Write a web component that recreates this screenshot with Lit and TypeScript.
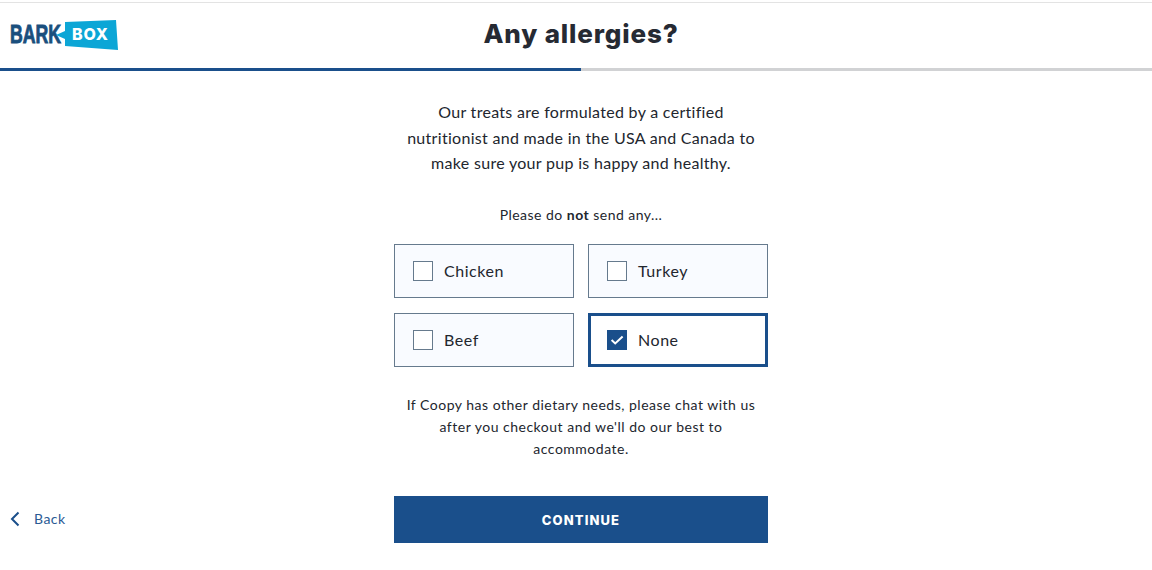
import { LitElement, html, css, svg } from "lit";
import { customElement } from "lit/decorators.js";

const OPTIONS = [
  { label: "Chicken", checked: false },
  { label: "Turkey", checked: false },
  { label: "Beef", checked: false },
  { label: "None", checked: true },
];

@customElement("app-root")
export class AppRoot extends LitElement {
  static styles = css`
    :host { display: block; width: 1152px; height: 570px; background: #fff; overflow: hidden;
      font-family: "Lato", "Liberation Sans", sans-serif; color: #22262e; }
    .topline { height: 1px; margin-top: 2px; background: #e3e3e3; }
    header { position: relative; height: 65px; display: flex; align-items: center; justify-content: center; padding-left: 10px; }
    .logo { position: absolute; left: 10px; top: 16px; display: block; }
    .logo .bark { font-family: "Liberation Sans", sans-serif; font-weight: 700; }
    .logo .box-word { font-family: "Inter", sans-serif; font-weight: 800; }
    h1 { margin: 0 0 4px; font: 800 26px/32px "Inter", sans-serif; color: #262a33; letter-spacing: 0.85px; }
    .progress { height: 3px; background: #d1d2d4; }
    .progress div { height: 100%; width: 581px; background: #1a4f8b; }
    main { width: 374px; margin: 0 0 0 394px; display: flex; flex-direction: column; align-items: center; text-align: center; }
    .intro { margin: 28px -10px 0; font-size: 16px; line-height: 25.5px; letter-spacing: 0.3px; }
    .ask { margin: 29.5px 0 0; font-size: 14px; line-height: 20px; letter-spacing: 0.47px; }
    .ask b { font-weight: 700; }
    .grid { margin-top: 19px; width: 100%; display: grid; grid-template-columns: 180px 180px; gap: 15px 14px; }
    .opt { box-sizing: border-box; height: 54px; border: 1px solid #667a8d; background: #f9fbff;
      display: flex; align-items: center; gap: 11px; padding-left: 18px; font-size: 16px; letter-spacing: 0.55px; }
    .opt.on { border: 3px solid #1a4f8b; background: #fff; padding-left: 16px; }
    .label { margin-bottom: 2px; }
    .box { box-sizing: border-box; width: 20px; height: 20px; border: 1px solid #667a8d; background: #fff;
      display: flex; align-items: center; justify-content: center; flex: none; }
    .on .box { background: #1a4f8b; border-color: #1a4f8b; }
    .note { margin: 27px -4px 0; font-size: 14px; line-height: 22px; letter-spacing: 0.5px; }
    .cta { margin-top: 36px; width: 100%; height: 47px; border: 0; background: #1a4f8b; color: #fff;
      font: 800 13px "Inter", sans-serif; letter-spacing: 1.1px; padding: 0; }
    .back { position: absolute; left: 10px; top: 511px; display: flex; align-items: center; gap: 14px;
      font-size: 14px; letter-spacing: 0.45px; color: #2a5a94; line-height: 16px; }
    .back svg { display: block; }
  `;

  render() {
    return html`
      <div class="topline"></div>
      <header>
        <svg class="logo" width="110" height="36" viewBox="0 0 110 36" aria-label="BarkBox">
          <text class="bark" transform="translate(0 24) scale(0.68 1)" font-size="26" fill="#1a4f7d" stroke="#1a4f7d" stroke-width="0.9">BARK</text>
          <polygon points="55,3 106,1 108,31 55,27 55,20 46,16 55,12" fill="#0ca6d6"></polygon>
          <text class="box-word" x="62" y="21" font-size="16" fill="#fff" letter-spacing="0.8">BOX</text>
        </svg>
        <h1>Any allergies?</h1>
      </header>
      <div class="progress"><div></div></div>
      <main>
        <p class="intro">Our treats are formulated by a certified<br />nutritionist and made in the USA and Canada to<br />make sure your pup is happy and healthy.</p>
        <p class="ask">Please do <b>not</b> send any...</p>
        <div class="grid">
          ${OPTIONS.map(
            (o) => html`<div class="opt ${o.checked ? "on" : ""}">
              <span class="box">${o.checked
                ? svg`<svg width="14" height="12" viewBox="0 0 14 12"><path d="M1.6 6 L5.2 9.4 L12.6 2.4" fill="none" stroke="#fff" stroke-width="2"></path></svg>`
                : ""}</span>
              <span class="label">${o.label}</span>
            </div>`
          )}
        </div>
        <p class="note">If Coopy has other dietary needs, please chat with us<br />after you checkout and we'll do our best to<br />accommodate.</p>
        <button class="cta">CONTINUE</button>
      </main>
      <div class="back">
        <svg width="10" height="16" viewBox="0 0 10 16"><path d="M8.5 1.5 L2 8 L8.5 14.5" fill="none" stroke="#1a4f8b" stroke-width="2"></path></svg>
        <span>Back</span>
      </div>
    `;
  }
}
